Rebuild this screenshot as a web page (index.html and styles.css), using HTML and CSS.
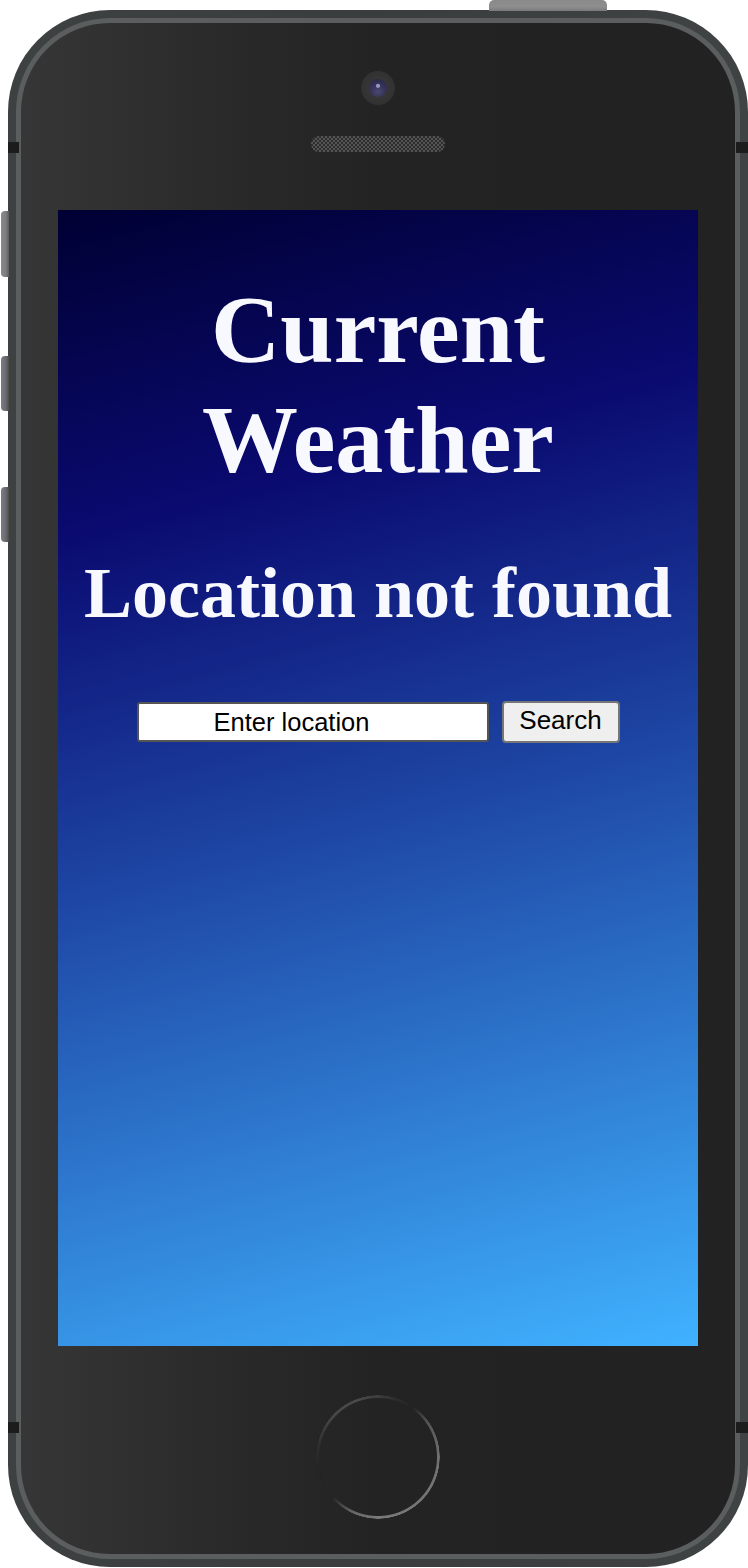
FILE: index.html
```html
<!DOCTYPE html>
<html lang="en">
<head>
<meta charset="utf-8">
<title>Current Weather</title>
<link rel="stylesheet" href="styles.css">
</head>
<body>
<div class="device">
  <span class="btn-top"></span>
  <span class="btn-side btn-side-1"></span>
  <span class="btn-side btn-side-2"></span>
  <span class="btn-side btn-side-3"></span>
  <span class="notch notch-tl"></span>
  <span class="notch notch-tr"></span>
  <span class="notch notch-bl"></span>
  <span class="notch notch-br"></span>
  <div class="phone">
    <div class="rim">
      <div class="camera"><div class="lens"></div></div>
      <div class="speaker"></div>
      <main class="screen">
        <h1 class="title">Current Weather</h1>
        <h2 class="status">Location not found</h2>
        <form class="search" onsubmit="return false">
          <input class="search-input" type="text" placeholder="Enter location">
          <button class="search-btn" type="submit">Search</button>
        </form>
      </main>
      <div class="home"></div>
    </div>
  </div>
</div>
</body>
</html>
```

FILE: styles.css
```css
html, body {
  margin: 0;
  padding: 0;
  background: #ffffff;
}

.device {
  position: relative;
  width: 748px;
  height: 1568px;
  padding: 10px 0 0 8px;
  box-sizing: border-box;
}

.phone {
  width: 740px;
  height: 1557px;
  box-sizing: border-box;
  padding: 8px;
  border-radius: 102px;
  background: linear-gradient(90deg, #3e4141 0%, #3a3d3d 50%, #3f4343 100%);
}

.rim {
  height: 100%;
  box-sizing: border-box;
  border: 5px solid #5a5e5e;
  border-radius: 94px;
  background: linear-gradient(90deg, #363636 0%, #2b2b2b 25%, #232323 50%, #222222 100%);
  display: flex;
  flex-direction: column;
  align-items: center;
}

.camera {
  margin-top: 48px;
  width: 34px;
  height: 34px;
  border-radius: 50%;
  background: radial-gradient(circle, #3a3a3a 0%, #333333 60%, #2c2c2c 100%);
  display: flex;
  align-items: center;
  justify-content: center;
}

.lens {
  width: 18px;
  height: 18px;
  border-radius: 50%;
  background:
    radial-gradient(circle at 50% 38%, #9a98c0 0, #9a98c0 1.5px, transparent 2.5px),
    radial-gradient(circle at 50% 70%, #4a4870 0, #36345a 45%, #25233f 100%);
}

.speaker {
  margin-top: 31px;
  width: 134px;
  height: 16px;
  border-radius: 8px;
  background: repeating-conic-gradient(#5a5a5a 0 25%, #2f2f2f 0 50%) 0 0 / 4px 4px;
  opacity: 0.9;
}

.screen {
  margin-top: 58px;
  width: 640px;
  height: 1136px;
  flex: none;
  display: flex;
  flex-direction: column;
  align-items: center;
  background: linear-gradient(165deg, #000033 0%, #0a0a70 25%, #1d44a2 52%, #40b2ff 100%);
  font-family: "Liberation Serif", "Times New Roman", serif;
  color: #f8f8ff;
  text-align: center;
}

.title {
  margin: 65px 0 0;
  font-size: 96px;
  line-height: 110px;
  font-weight: bold;
}

.status {
  margin: 57px 0 0;
  font-size: 72px;
  line-height: 83px;
  font-weight: bold;
}

.search {
  margin-top: 66px;
  display: flex;
  align-items: center;
  gap: 13px;
}

.search-input {
  width: 352px;
  height: 40px;
  box-sizing: border-box;
  margin: 0;
  padding: 0 42px 0 0;
  border: 2px solid #555555;
  border-radius: 3px;
  background: #ffffff;
  font-family: "Liberation Sans", Arial, sans-serif;
  font-size: 25.5px;
  color: #000000;
  text-align: center;
  outline: none;
}

.search-input::placeholder {
  color: #000000;
  opacity: 1;
}

.search-btn {
  width: 118px;
  height: 42px;
  box-sizing: border-box;
  margin: 0;
  padding: 0 0 3px;
  border: 2px solid #767676;
  border-radius: 4px;
  background: #efefef;
  font-family: "Liberation Sans", Arial, sans-serif;
  font-size: 26px;
  color: #000000;
}

.home {
  margin-top: 49px;
  width: 124px;
  height: 124px;
  flex: none;
  border-radius: 50%;
  background: conic-gradient(from 0deg,
    #3e3e3e 0deg,
    #2c2c2c 18deg,
    #232323 35deg,
    #555555 55deg,
    #707070 90deg,
    #7a7a7a 180deg,
    #666666 205deg,
    #262626 228deg,
    #232323 255deg,
    #2e2e2e 280deg,
    #474747 312deg,
    #4a4a4a 340deg,
    #3e3e3e 360deg);
  -webkit-mask: radial-gradient(circle, transparent 58.5px, #000 59.5px, #000 61.5px, transparent 62px);
  mask: radial-gradient(circle, transparent 58.5px, #000 59.5px, #000 61.5px, transparent 62px);
}

.btn-top {
  position: absolute;
  left: 489px;
  top: 0;
  width: 118px;
  height: 11px;
  border-radius: 5px 5px 0 0;
  background: linear-gradient(180deg, #8a8a8a 0%, #8e8e8e 60%, #7a7a7a 100%);
}

.btn-side {
  position: absolute;
  left: 1px;
  width: 8px;
  border-radius: 4px 0 0 4px;
  background: linear-gradient(90deg, #8a8a8a 0%, #7e7e7e 60%, #5c5c5c 100%);
}

.btn-side-1 { top: 211px; height: 66px; }
.btn-side-2 { top: 356px; height: 55px; background: linear-gradient(90deg, #7c7c86 0%, #6a6a72 60%, #4c4c44 100%); }
.btn-side-3 { top: 487px; height: 55px; background: linear-gradient(90deg, #7c7c86 0%, #6a6a72 60%, #4c4c44 100%); }

.notch {
  position: absolute;
  width: 11px;
  height: 11px;
  background: #1c1c1c;
}

.notch-tl { left: 8px; top: 142px; }
.notch-tr { left: 736px; top: 142px; width: 12px; }
.notch-bl { left: 8px; top: 1422px; }
.notch-br { left: 736px; top: 1422px; width: 12px; }
```
